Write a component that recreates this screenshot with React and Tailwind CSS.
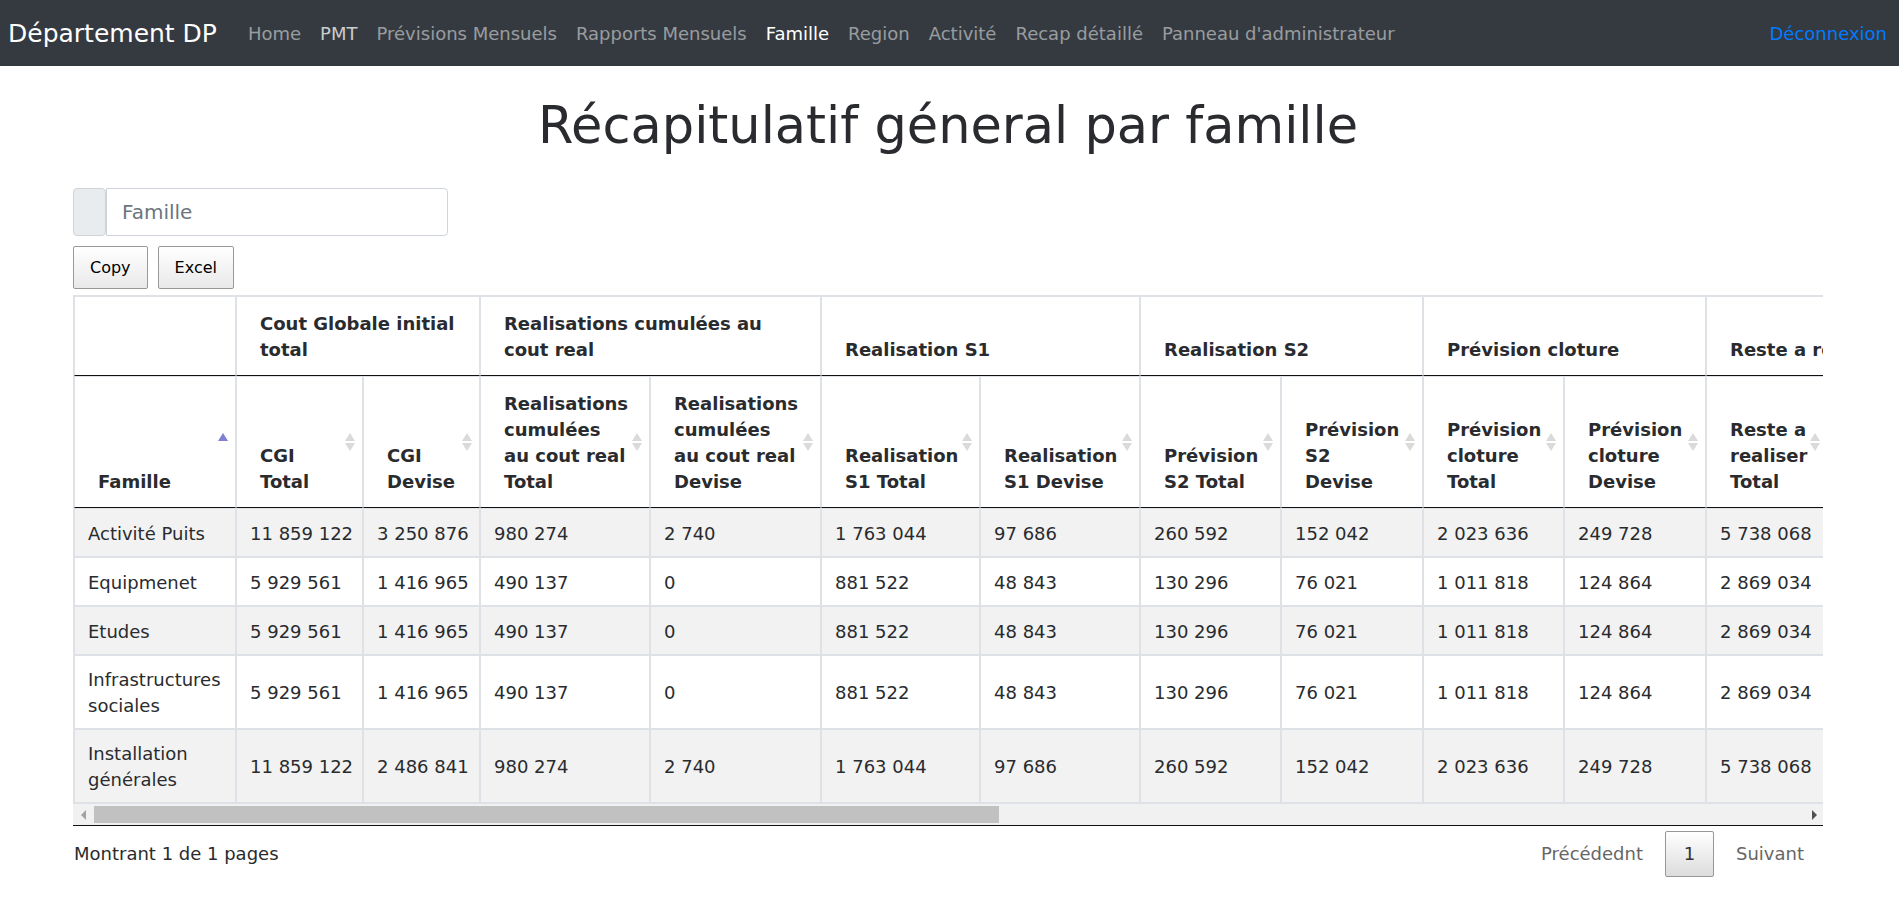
import React from 'react';

const navItems = [
  { label: 'Home', tone: 'text-white/50' },
  { label: 'PMT', tone: 'text-white/75' },
  { label: 'Prévisions Mensuels', tone: 'text-white/50' },
  { label: 'Rapports Mensuels', tone: 'text-white/50' },
  { label: 'Famille', tone: 'text-white' },
  { label: 'Region', tone: 'text-white/50' },
  { label: 'Activité', tone: 'text-white/50' },
  { label: 'Recap détaillé', tone: 'text-white/50' },
  { label: "Panneau d'administrateur", tone: 'text-white/50' },
];

const groups = [
  { label: '', span: 1 },
  { label: 'Cout Globale initial total', span: 2 },
  { label: 'Realisations cumulées au cout real', span: 2 },
  { label: 'Realisation S1', span: 2 },
  { label: 'Realisation S2', span: 2 },
  { label: 'Prévision cloture', span: 2 },
  { label: 'Reste a realiser', span: 2 },
];

const columns = [
  { label: 'Famille', width: 'w-[162px]' },
  { label: 'CGI\nTotal', width: 'w-[127px]' },
  { label: 'CGI\nDevise', width: 'w-[117px]' },
  { label: 'Realisations\ncumulées\nau cout real\nTotal', width: 'w-[170px]' },
  { label: 'Realisations\ncumulées\nau cout real\nDevise', width: 'w-[171px]' },
  { label: 'Realisation\nS1 Total', width: 'w-[159px]' },
  { label: 'Realisation\nS1 Devise', width: 'w-[160px]' },
  { label: 'Prévision\nS2 Total', width: 'w-[141px]' },
  { label: 'Prévision\nS2\nDevise', width: 'w-[142px]' },
  { label: 'Prévision\ncloture\nTotal', width: 'w-[141px]' },
  { label: 'Prévision\ncloture\nDevise', width: 'w-[142px]' },
  { label: 'Reste a\nrealiser\nTotal', width: 'w-[122px]' },
  { label: 'Reste a\nrealiser\nDevise', width: 'w-[122px]' },
];

const full = ['980 274', '2 740', '1 763 044', '97 686', '260 592', '152 042', '2 023 636', '249 728', '5 738 068', '3 250 876'];
const half = ['490 137', '0', '881 522', '48 843', '130 296', '76 021', '1 011 818', '124 864', '2 869 034', '1 416 965'];

const rows = [
  ['Activité Puits', '11 859 122', '3 250 876', ...full],
  ['Equipmenet', '5 929 561', '1 416 965', ...half],
  ['Etudes', '5 929 561', '1 416 965', ...half],
  ['Infrastructures sociales', '5 929 561', '1 416 965', ...half],
  ['Installation générales', '11 859 122', '2 486 841', ...full],
];

function SortIcon({ ascending }) {
  return (
    <svg viewBox="0 0 10 18" className="absolute top-1/2 right-[7px] h-[18px] w-[10px] -translate-y-1/2" aria-hidden="true">
      <path d="M5 0 L10 8 H0 Z" fill={ascending ? '#7f80d3' : '#dadada'} />
      {!ascending && <path d="M0 10 H10 L5 18 Z" fill="#dadada" />}
    </svg>
  );
}

function Navbar() {
  return (
    <nav className="flex min-h-[66px] items-center bg-[#343a40] px-2 pt-[2px] text-[18px] leading-[26px]">
      <a href="#accueil" className="mr-[31px] text-[25px] leading-[34px] whitespace-nowrap text-white">
        Département DP
      </a>
      <ul className="flex flex-1 flex-wrap gap-x-[19px]">
        {navItems.map((item) => (
          <li key={item.label}>
            <a href="#page" className={`whitespace-nowrap ${item.tone}`}>
              {item.label}
            </a>
          </li>
        ))}
      </ul>
      <a href="#deconnexion" className="mr-1 text-[#007bff]">
        Déconnexion
      </a>
    </nav>
  );
}

function RecapTable() {
  return (
    <div className="border-b border-[#111]">
      <div className="overflow-x-auto [scrollbar-width:none]">
        <table className="w-[1878px] table-fixed border-separate border-spacing-0 border border-[#dee2e6]">
          <colgroup>
            {columns.map((c) => (
              <col key={c.label} className={c.width} />
            ))}
          </colgroup>
          <thead>
            <tr className="h-[80px]">
              {groups.map((g) => (
                <th
                  key={g.label}
                  colSpan={g.span}
                  scope="colgroup"
                  className="border border-[#dee2e6] border-b-[#111] py-[12px] pr-[18px] pl-[23px] text-left align-bottom font-bold"
                >
                  {g.label}
                </th>
              ))}
            </tr>
            <tr className="h-[132px]">
              {columns.map((c, i) => (
                <th
                  key={c.label}
                  scope="col"
                  className="relative border border-[#dee2e6] border-b-[#111] py-[12px] pl-[23px] text-left align-bottom font-bold whitespace-pre"
                >
                  {c.label}
                  <SortIcon ascending={i === 0} />
                </th>
              ))}
            </tr>
          </thead>
          <tbody>
            {rows.map((row) => (
              <tr key={row[0]} className="h-[49px] odd:bg-[#f2f2f2]">
                {row.map((cell, i) => (
                  <td key={i} className="border border-[#dee2e6] pt-[11px] pb-[9px] pl-[13px] align-middle">
                    {cell}
                  </td>
                ))}
              </tr>
            ))}
          </tbody>
        </table>
      </div>
      <div className="flex h-[21px] items-center bg-[#f1f1f1]" aria-hidden="true">
        <svg viewBox="0 0 21 10" className="h-[10px] w-[21px]">
          <path d="M13 0 V10 L8 5 Z" fill="#a3a3a3" />
        </svg>
        <div className="flex flex-1">
          <div className="h-[17px] w-[53%] bg-[#c1c1c1]" />
        </div>
        <svg viewBox="0 0 21 10" className="h-[10px] w-[21px]">
          <path d="M10 0 V10 L15 5 Z" fill="#505050" />
        </svg>
      </div>
    </div>
  );
}

const toolButton =
  'h-[43px] rounded-[2px] border border-[#999] bg-linear-to-b from-white to-[#e9e9e9] px-4 text-[16px] text-black';

export default function App() {
  return (
    <div className="min-h-screen bg-white font-['DejaVu_Sans',Verdana,sans-serif] text-[18px] leading-[26px] text-[#292b2e]">
      <Navbar />
      <main className="pr-[76px] pl-[73px]">
        <h1 className="pt-[30px] text-center text-[51px] leading-[60px]">Récapitulatif géneral par famille</h1>
        <div className="mt-[32px] flex h-[48px] max-w-[375px]">
          <span className="w-[33px] rounded-[4px] border border-[#ced4da] bg-[#e9ecef]" />
          <input
            type="text"
            aria-label="Famille"
            placeholder="Famille"
            className="min-w-0 flex-1 rounded-r-[4px] border border-[#ced4da] px-[15px] text-[20px] placeholder:text-[#6c757d]"
          />
        </div>
        <div className="mt-[10px] mb-[6px] flex gap-[10px]">
          <button type="button" className={toolButton}>Copy</button>
          <button type="button" className={toolButton}>Excel</button>
        </div>
        <RecapTable />
        <div className="flex items-center justify-between px-px pt-[5px]">
          <p>Montrant 1 de 1 pages</p>
          <div className="flex h-[46px] items-stretch gap-1">
            <button type="button" className="px-[18px] text-[#666]">Précédednt</button>
            <button
              type="button"
              className="w-[49px] rounded-[2px] border border-[#979797] bg-linear-to-b from-white to-[#dcdcdc] text-[#333]"
            >
              1
            </button>
            <button type="button" className="px-[18px] text-[#666]">Suivant</button>
          </div>
        </div>
      </main>
    </div>
  );
}
